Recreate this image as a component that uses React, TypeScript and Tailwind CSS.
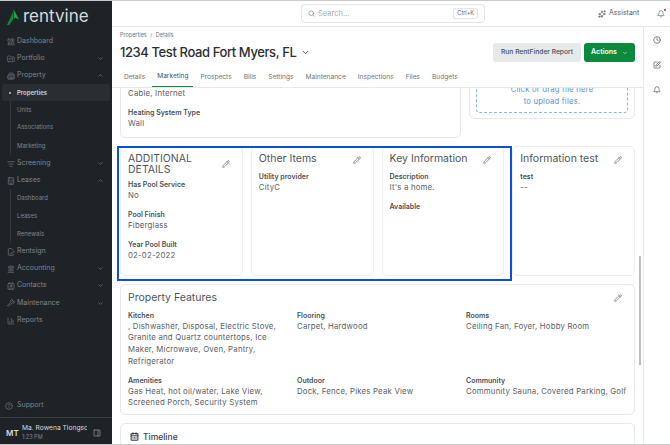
import {
  Bell,
  Building2,
  CalendarDays,
  ChartColumn,
  ChevronDown,
  ChevronUp,
  CircleHelp,
  Clock,
  Contact,
  FileSignature,
  FolderKanban,
  Landmark,
  LayoutDashboard,
  ListFilter,
  PanelRight,
  Pencil,
  Search,
  Sparkles,
  SquarePen,
  Wrench,
  Building,
} from "lucide-react";
import type { ComponentType, ReactNode } from "react";

type NavItem = {
  label: string;
  icon?: ComponentType<{ className?: string }>;
  chevron?: "up" | "down";
  active?: boolean;
  h: string;
};

const nav: NavItem[] = [
  { label: "Dashboard", icon: LayoutDashboard, h: "h-[17px]" },
  { label: "Portfolio", icon: FolderKanban, chevron: "down", h: "h-[17px]" },
  { label: "Property", icon: Building2, chevron: "up", h: "h-[17px]" },
  { label: "Properties", active: true, h: "h-[17px]" },
  { label: "Units", h: "h-[17px]" },
  { label: "Associations", h: "h-[17px]" },
  { label: "Marketing", h: "h-[20px]" },
  { label: "Screening", icon: ListFilter, chevron: "down", h: "h-[17px]" },
  { label: "Leases", icon: Building, chevron: "up", h: "h-[17px]" },
  { label: "Dashboard", h: "h-[17px]" },
  { label: "Leases", h: "h-[18px]" },
  { label: "Renewals", h: "h-[19px]" },
  { label: "Rentsign", icon: FileSignature, h: "h-[17px]" },
  { label: "Accounting", icon: Landmark, chevron: "down", h: "h-[17px]" },
  { label: "Contacts", icon: Contact, chevron: "down", h: "h-[17px]" },
  { label: "Maintenance", icon: Wrench, chevron: "down", h: "h-[18px]" },
  { label: "Reports", icon: ChartColumn, h: "h-[17px]" },
];

const tabs = ["Details", "Marketing", "Prospects", "Bills", "Settings", "Maintenance", "Inspections", "Files", "Budgets"];

function Sidebar() {
  return (
    <aside className="flex h-full w-[112px] shrink-0 flex-col bg-[#1e2328]">
      <div className="flex h-[31px] items-center pl-[7px]">
        <svg viewBox="0 0 12 16" className="h-[16px] w-[12px]">
          <path d="M6.5 0 L12 10.5 L8 8.4 L7 10 Z" fill="#22a04f" />
          <path d="M6 3 L6.4 10 L2.2 16 L0 16 Z" fill="#0f8a3f" />
        </svg>
        <span className="ml-[4px] text-[17px] leading-none text-[#d8dadc]">rentvine</span>
      </div>
      <nav className="mt-[1px] flex flex-col">
        {nav.map((item, i) => {
          const Icon = item.icon;
          return (
            <div
              key={i}
              className={`mx-[2px] flex items-center rounded-[3px] ${item.h} ${item.active ? "bg-[#292e33]" : ""}`}
            >
              <div className="flex h-full w-[15px] items-center justify-center">
                {Icon ? <Icon className="ml-[2px] h-[8px] w-[8px] text-[#6f7780]" /> : null}
                {item.active ? <span className="h-[2px] w-[2px] rounded-full bg-[#c5c9cd]" /> : null}
                {!Icon && !item.active ? <span className="ml-[1px] h-full w-[1px] bg-[#33383d]" /> : null}
              </div>
              <span
                className={
                  Icon
                    ? "text-[7px] text-[#7d858e]"
                    : item.active
                      ? "text-[6px] font-semibold text-[#cfd3d7]"
                      : "text-[6px] text-[#7d858e]"
                }
              >
                {item.label}
              </span>
              {item.chevron === "down" ? <ChevronDown className="ml-auto mr-[6px] h-[7px] w-[7px] text-[#7d858e]" /> : null}
              {item.chevron === "up" ? <ChevronUp className="ml-auto mr-[6px] h-[7px] w-[7px] text-[#7d858e]" /> : null}
            </div>
          );
        })}
      </nav>
      <div className="mt-auto flex h-[17px] items-center pl-[5px]">
        <CircleHelp className="h-[8px] w-[8px] text-[#6f7780]" />
        <span className="ml-[4px] text-[7px] text-[#7d858e]">Support</span>
      </div>
      <div className="mt-[3px] flex h-[27px] items-center border-t border-[#3a3f44] pl-[6px]">
        <span className="w-[16px] pt-[4px] text-[8px] font-semibold text-[#d8dadc]">MT</span>
        <div className="w-[65px] overflow-hidden whitespace-nowrap pt-[3px]">
          <div className="text-[6.7px] leading-[9px] text-[#d8dadc]">Ma. Rowena Tiongsco</div>
          <div className="text-[5.5px] leading-[8px] text-[#7d858e]">1:23 PM</div>
        </div>
        <PanelRight className="ml-[6px] mt-[3px] h-[8px] w-[8px] text-[#9aa0a6]" />
      </div>
    </aside>
  );
}

function Field({ label, value }: { label: string; value?: ReactNode }) {
  return (
    <div className="mb-[7.3px]">
      <div className="text-[7px] font-semibold leading-[11px] text-[#4a4f55]">{label}</div>
      {value ? <div className="text-[7.8px] leading-[11.7px] tracking-[0.2px] text-[#5b6066]">{value}</div> : null}
    </div>
  );
}

function EditIcon() {
  return <Pencil className="h-[8px] w-[8px] shrink-0 self-center text-[#5b6066]" />;
}

function InfoCard({ title, children }: { title: string; children: ReactNode }) {
  return (
    <div className="h-[130px] flex-1 rounded-[5px] border border-[#eceef0] bg-white px-[7px]">
      <div className="flex min-h-[24px] items-start justify-between pb-[4px] pr-[5px] pt-[6px]">
        <h3 className="text-[10.5px] leading-[11px] text-[#50555b]">{title}</h3>
        <EditIcon />
      </div>
      <div>{children}</div>
    </div>
  );
}

function TopBar() {
  return (
    <div className="flex h-[26px] shrink-0 items-center border-b border-[#e6e8ea] bg-white">
      <div className="ml-[189px] flex h-[19px] w-[184px] items-center rounded-[4px] border border-[#e3e5e7] px-[6px]">
        <Search className="h-[7px] w-[7px] text-[#70757b]" />
        <span className="ml-[3px] text-[7.5px] text-[#a9adb1]">Search...</span>
        <span className="ml-auto rounded-[2px] border border-[#e3e5e7] px-[3px] text-[5.5px] leading-[9px] text-[#5b6066]">Ctrl+K</span>
      </div>
      <Sparkles className="ml-[113px] h-[8px] w-[8px] text-[#4a4f55]" />
      <span className="ml-[3px] text-[7px] text-[#5b6066]">Assistant</span>
      <div className="relative ml-[18px]">
        <Bell className="h-[8px] w-[8px] text-[#5b6066]" />
        <span className="absolute -top-[1px] right-[-1px] h-[2px] w-[2px] rounded-full bg-[#b91c1c]" />
      </div>
    </div>
  );
}

function Header() {
  return (
    <div className="shrink-0 border-b border-[#e6e8ea] bg-white pl-[8px]">
      <div className="pt-[4px] text-[5.5px] leading-[8px] text-[#70757b]">
        Properties <span className="mx-[2px]">/</span> Details
      </div>
      <div className="flex h-[27px] items-center">
        <h1 className="text-[13px] font-medium tracking-[-0.4px] text-[#2a2e33]">1234 Test Road Fort Myers, FL</h1>
        <ChevronDown className="ml-[5px] h-[9px] w-[9px] text-[#2a2e33]" />
        <button className="ml-auto h-[19px] w-[88px] rounded-[3px] bg-[#e6e8ea] text-[6.7px] font-medium text-[#4a4f55]">Run RentFinder Report</button>
        <button className="ml-[3px] mr-[8px] flex h-[19px] w-[51px] items-center justify-center rounded-[3px] bg-[#0b8a3e] text-[7px] font-semibold text-white">
          Actions
          <ChevronDown className="ml-[5px] h-[6px] w-[6px]" />
        </button>
      </div>
      <div className="-ml-[1px] mt-[2px] flex h-[19px] text-[6.6px] text-[#70757b]">
        {tabs.map((t) => (
          <div
            key={t}
            className={`mr-[2px] flex items-center px-[5px] ${t === "Marketing" ? "border-b border-[#0b8a3e] text-[#4a4f55]" : ""}`}
          >
            {t}
          </div>
        ))}
      </div>
    </div>
  );
}

function Content() {
  return (
    <div className="relative min-h-0 flex-1 overflow-hidden bg-white">
      <div className="-mt-[30px] flex flex-col gap-[8px] px-[8px]">
        <div className="flex items-start gap-[8px]">
          <div className="h-[80px] w-[341px] rounded-[5px] border border-[#e6e8ea] px-[7px] pt-[29px]">
            <div className="text-[7.8px] leading-[11.7px] tracking-[0.2px] text-[#5b6066]">Cable, Internet</div>
            <div className="mt-[7.5px]">
              <Field label="Heating System Type" value="Wall" />
            </div>
          </div>
          <div className="h-[61px] flex-1 rounded-[5px] border border-[#e6e8ea] px-[6px] pb-[6px]">
            <div className="flex h-[54px] flex-col items-center justify-end rounded-[4px] border border-dashed border-[#8db4e0] pb-[5px] text-center text-[7.7px] leading-[11.5px] tracking-[0.2px] text-[#5b91d0]">
              <div>Click or drag file here</div>
              <div>to upload files.</div>
            </div>
          </div>
        </div>
        <div className="flex gap-[8px]">
          <InfoCard title="ADDITIONAL DETAILS">
            <Field label="Has Pool Service" value="No" />
            <Field label="Pool Finish" value="Fiberglass" />
            <Field label="Year Pool Built" value="02-02-2022" />
          </InfoCard>
          <InfoCard title="Other Items">
            <Field label="Utility provider" value="CityC" />
          </InfoCard>
          <InfoCard title="Key Information">
            <Field label="Description" value="It's a home." />
            <Field label="Available" />
          </InfoCard>
          <InfoCard title="Information test">
            <Field label="test" value="--" />
          </InfoCard>
        </div>
        <div className="h-[131px] rounded-[5px] border border-[#e6e8ea] px-[7px]">
          <div className="flex h-[24.5px] items-center justify-between pr-[5px] pt-[2px]">
            <h3 className="text-[10.5px] text-[#50555b]">Property Features</h3>
            <EditIcon />
          </div>
          <div className="grid grid-cols-[169px_169px_1fr]">
            <div className="pr-[10px]">
              <Field label="Kitchen" value=", Dishwasher, Disposal, Electric Stove, Granite and Quartz countertops, Ice Maker, Microwave, Oven, Pantry, Refrigerator" />
            </div>
            <Field label="Flooring" value="Carpet, Hardwood" />
            <Field label="Rooms" value="Ceiling Fan, Foyer, Hobby Room" />
            <div className="pr-[10px]">
              <Field label="Amenities" value="Gas Heat, hot oil/water, Lake View, Screened Porch, Security System" />
            </div>
            <Field label="Outdoor" value="Dock, Fence, Pikes Peak View" />
            <Field label="Community" value="Community Sauna, Covered Parking, Golf" />
          </div>
        </div>
        <div className="flex h-[40px] items-start rounded-[5px] border border-[#e6e8ea] px-[9px] pt-[8px]">
          <CalendarDays strokeWidth={3} className="h-[9px] w-[9px] text-[#3a3f44]" />
          <span className="ml-[4px] text-[8.5px] font-medium leading-[10px] text-[#3a3f44]">Timeline</span>
        </div>
      </div>
      <div className="absolute left-[5px] top-[58px] h-[135px] w-[395px] border-2 border-[#0a4fe0]" />
      <div className="absolute right-[2px] top-[168px] h-[109px] w-[2px] bg-[#b9bec3]" />
    </div>
  );
}

function Rail() {
  return (
    <div className="flex w-[27px] shrink-0 flex-col items-center gap-[17px] border-l border-[#e6e8ea] bg-white pt-[9px] text-[#4a4f55]">
      <Clock className="h-[8px] w-[8px]" />
      <SquarePen className="h-[8px] w-[8px]" />
      <Bell className="h-[8px] w-[8px]" />
    </div>
  );
}

export default function App() {
  return (
    <div className="flex h-[445px] w-[670px] overflow-hidden border-y border-[#c9cbcd] bg-white font-['Inter',sans-serif]">
      <Sidebar />
      <div className="flex min-w-0 flex-1 flex-col">
        <TopBar />
        <div className="flex min-h-0 flex-1">
          <div className="flex min-w-0 flex-1 flex-col">
            <Header />
            <Content />
          </div>
          <Rail />
        </div>
      </div>
    </div>
  );
}
